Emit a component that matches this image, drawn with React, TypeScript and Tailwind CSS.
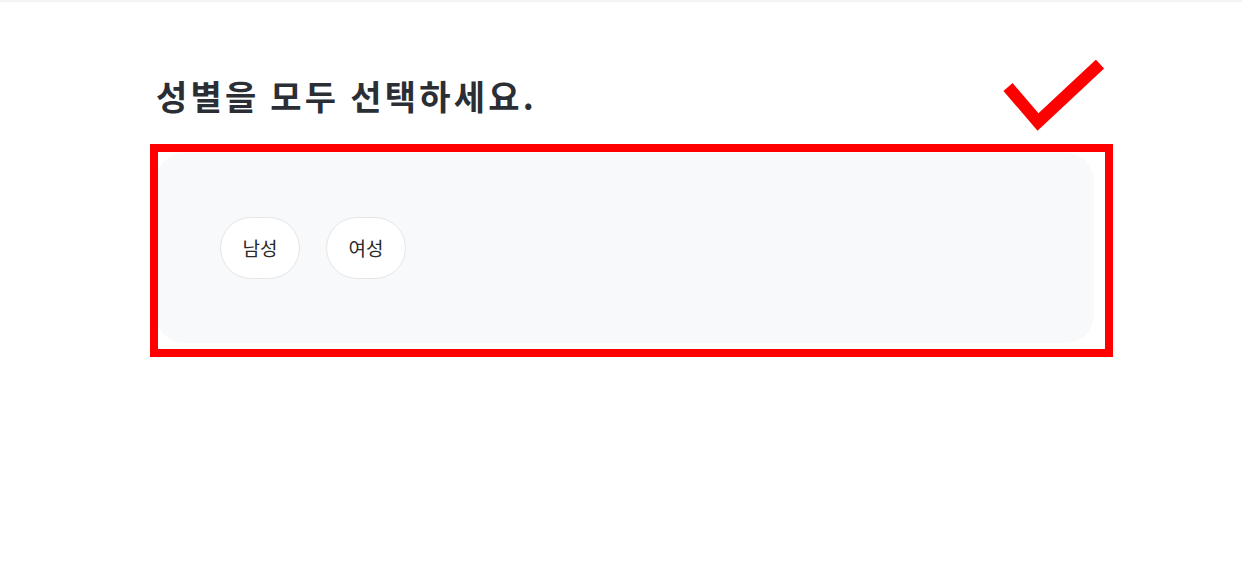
export default function App() {
  const options = ["남성", "여성"];
  return (
    <div className="min-h-screen bg-white font-['Noto_Sans_CJK_KR','Noto_Sans',sans-serif]">
      {/* 상단 얇은 구분선 */}
      <div className="h-[2px] w-full bg-[#f3f4f5]" />

      <div className="pl-[156px] pt-[68px]">
        <h2 className="text-[34px] font-bold leading-[51px] text-[#2b2f35] tracking-[3.2px]">
          성별을 모두 선택하세요.
        </h2>

        {/* 선택 카드 */}
        <div className="relative mt-[32px] w-[938px]">
          <div className="rounded-[28px] bg-[#f8f9fb] p-[64px] flex gap-[26px]">
            {options.map((o) => (
              <button
                key={o}
                className="h-[62px] w-[80px] rounded-full border border-[#e3e5e8] bg-white text-[19px] text-[#2a2a2a] flex items-center justify-center"
              >
                {o}
              </button>
            ))}
          </div>

          {/* 빨간 강조 표시 */}
          <div className="pointer-events-none absolute -left-[6px] -top-[9px] -right-[19px] -bottom-[14px] border-[8px] border-[#ff0000]" />
          <svg
            className="absolute -top-[93px] right-[-12px]"
            width="104"
            height="80"
            viewBox="0 0 104 80"
          >
            <path d="M6 27 L36 62 L98 4" fill="none" stroke="#ff0000" strokeWidth="12" />
          </svg>
        </div>
      </div>
    </div>
  );
}
